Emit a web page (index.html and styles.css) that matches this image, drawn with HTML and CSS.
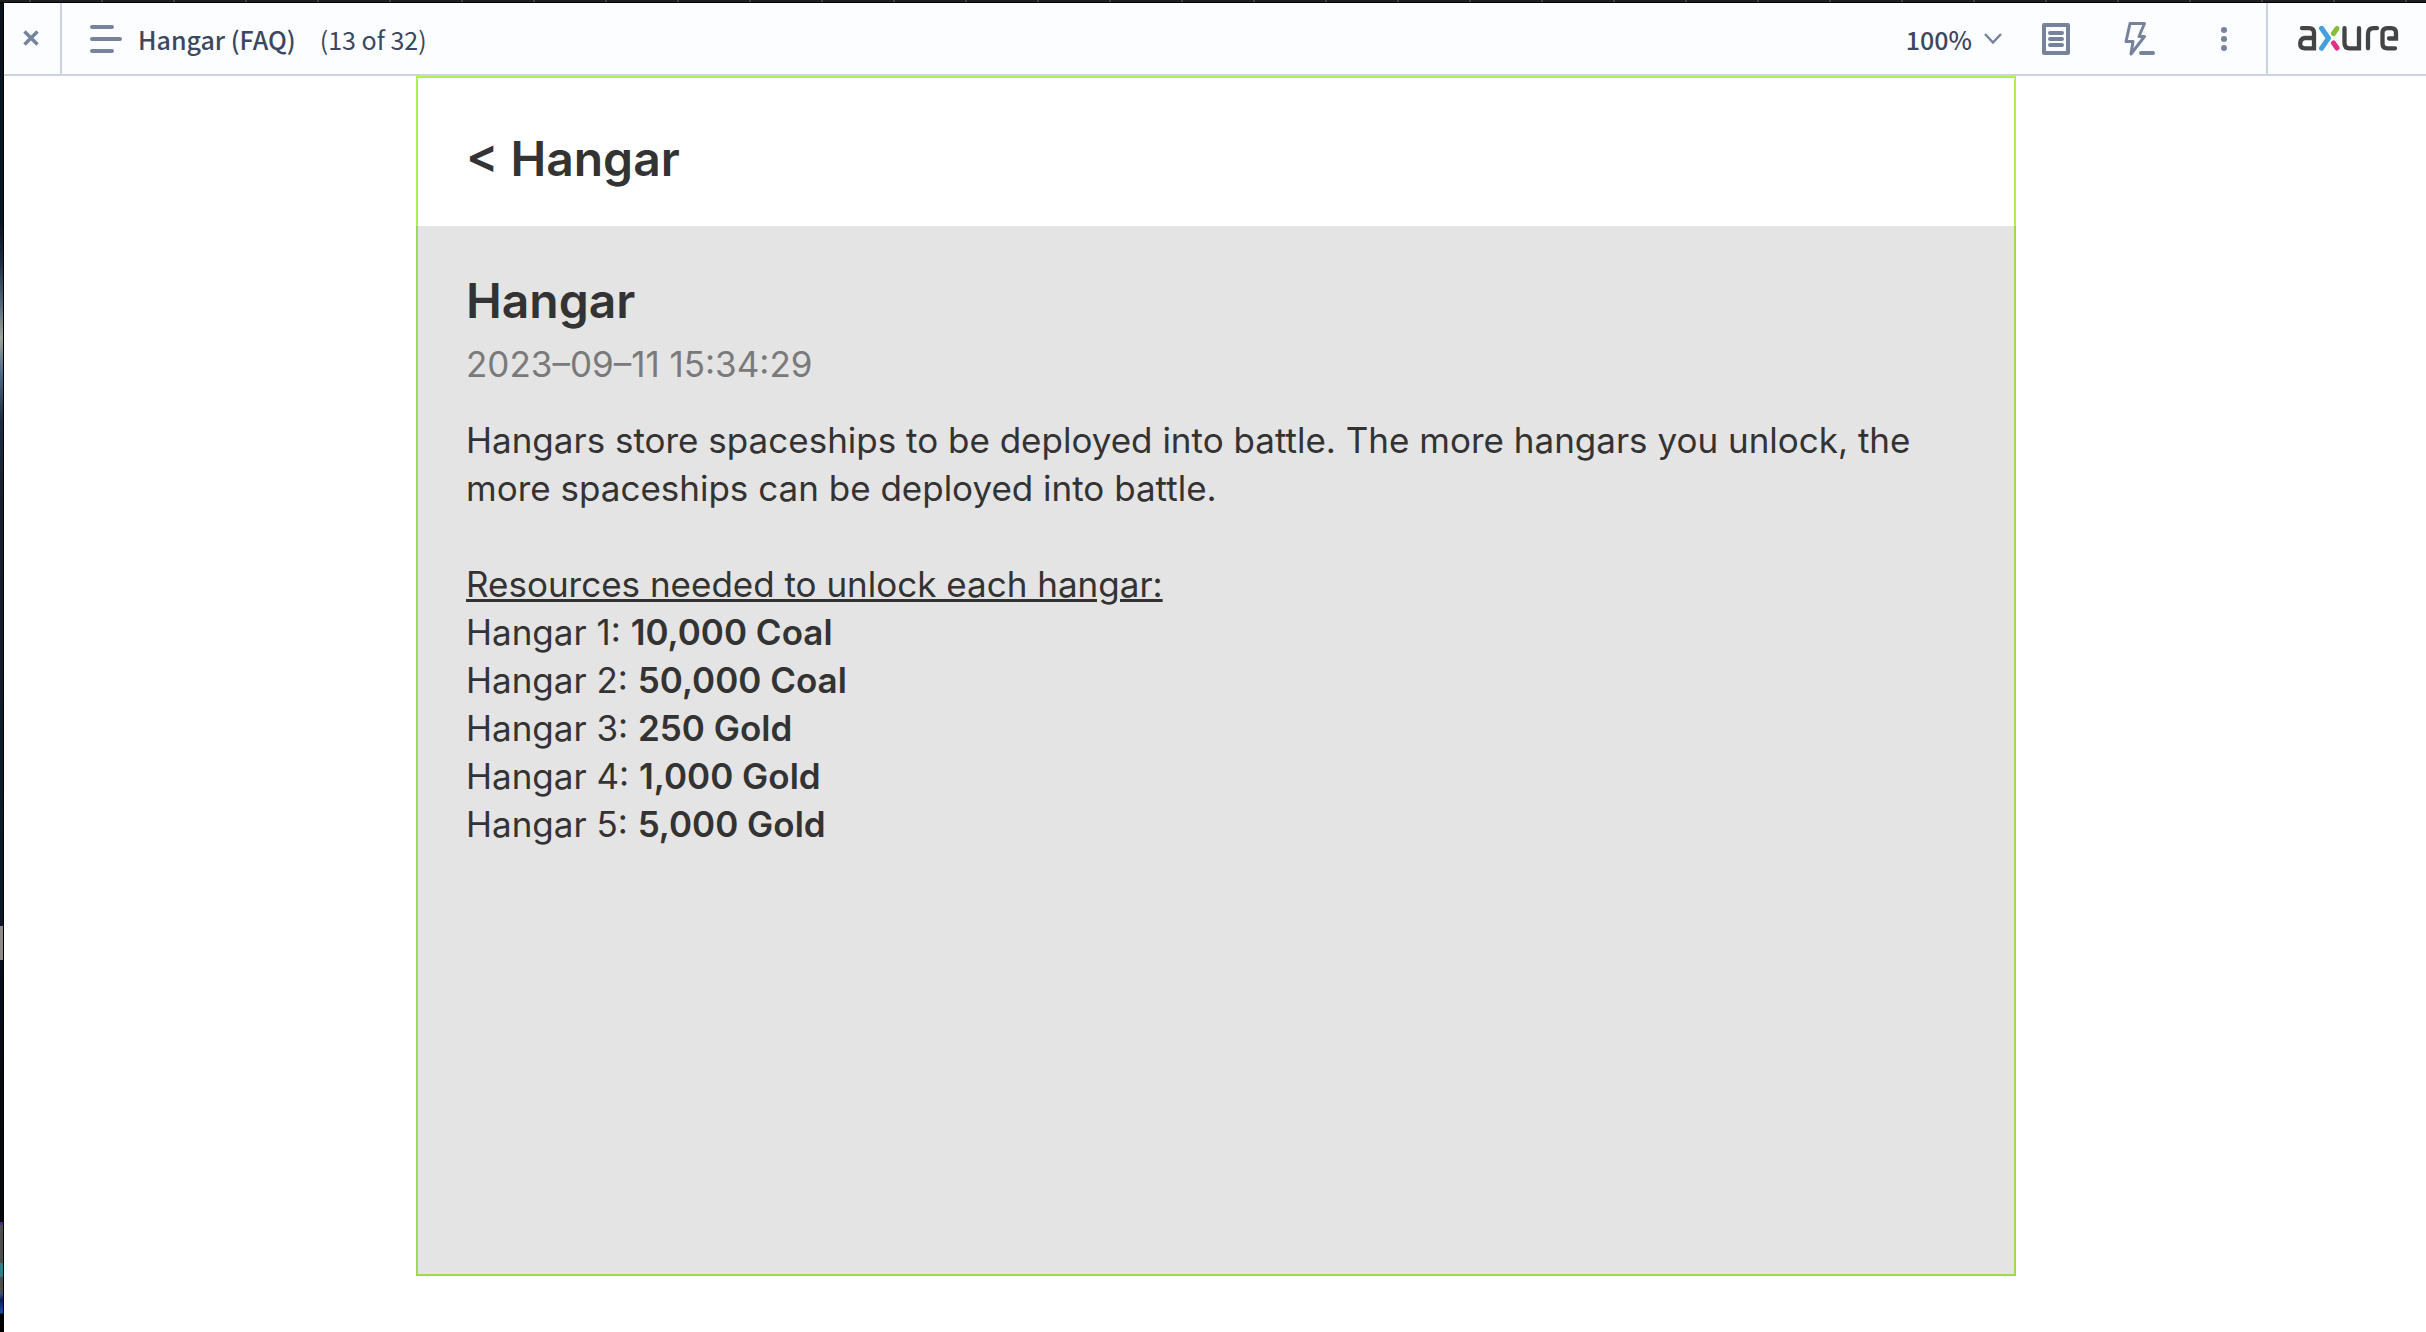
FILE: index.html
```html
<!DOCTYPE html>
<html lang="en">
<head>
<meta charset="utf-8">
<title>Hangar (FAQ)</title>
<link rel="stylesheet" href="styles.css">
</head>
<body>
<div class="window">
  <header class="toolbar">
    <button class="close" aria-label="Close">
      <svg width="16" height="16" viewBox="0 0 16 16"><path d="M1.500 1.500 14.500 14.500M14.500 1.500 1.500 14.500" stroke="currentColor" stroke-width="3.500"/></svg>
    </button>
    <button class="pages">
      <svg width="32" height="28" viewBox="0 0 32 28"><path d="M2 2H22M2 14H30M2 26H22" stroke="currentColor" stroke-width="4" stroke-linecap="round"/></svg>
      <span class="page-name">Hangar (FAQ)</span>
      <span class="page-count">(13 of 32)</span>
    </button>
    <div class="tools">
      <button class="zoom">100%
        <svg width="18" height="12" viewBox="0 0 18 12"><path d="M1 1 9 9.500 17 1" fill="none" stroke="currentColor" stroke-width="2.500"/></svg>
      </button>
      <button class="tool" aria-label="Notes">
        <svg width="28" height="32" viewBox="0 0 28 32"><rect x="2" y="2" width="24" height="28" fill="none" stroke="currentColor" stroke-width="4" stroke-linejoin="round"/><path d="M8 10H20M8 16H20M8 22H20" stroke="currentColor" stroke-width="4" stroke-linecap="round"/></svg>
      </button>
      <button class="tool" aria-label="Interactions">
        <svg width="32" height="36" viewBox="0 0 32 36"><path d="M6 2.500H20.500L15 15.500H20.500L7 33L9 20.500H2Z" fill="none" stroke="currentColor" stroke-width="3" stroke-linejoin="round"/><path d="M17 32H29" stroke="currentColor" stroke-width="4" stroke-linecap="round"/></svg>
      </button>
      <button class="tool" aria-label="More">
        <svg width="6" height="24" viewBox="0 0 6 24" fill="currentColor"><circle cx="3" cy="3" r="3"/><circle cx="3" cy="12" r="3"/><circle cx="3" cy="21" r="3"/></svg>
      </button>
    </div>
    <a class="brand" href="#" aria-label="Axure">
      <svg width="102" height="25" viewBox="0 0 102 25" fill="none" stroke="#444" stroke-width="4.300" stroke-linecap="round">
        <path d="M4 2.200H11Q16 2.200 16 7V22.300H7Q2.200 22.300 2.200 17.500T7 12H15.500"/>
        <path d="M23.500 2.200 30.500 12.200 23.500 22.300" stroke="#459fdb" stroke-width="5" stroke-linejoin="round"/>
        <path d="M39 2.500 35.500 7.500" stroke="#86bd3a" stroke-width="5"/>
        <path d="M39 22 35.500 17" stroke="#e03182" stroke-width="5"/>
        <path d="M46.500 2.200V17Q46.500 22.300 51.500 22.300H61V2.200"/>
        <path d="M70 22.300V8Q70 2.200 75.500 2.200H79"/>
        <path d="M97 22.300H89.500Q84.500 22.300 84.500 17.500V7Q84.500 2.200 89.500 2.200H93Q98 2.200 98 7V12.500H91"/>
      </svg>
    </a>
  </header>
  <main class="canvas">
    <article class="frame">
      <div class="frame-head"><a class="back" href="#">&lt; Hangar</a></div>
      <div class="frame-body">
        <h1>Hangar</h1>
        <time datetime="2023-09-11T15:34:29">2023–09–11 15:34:29</time>
        <p>Hangars store spaceships to be deployed into battle. The more hangars you unlock, the more spaceships can be deployed into battle.</p>
        <h2>Resources needed to unlock each hangar:</h2>
        <ul>
          <li>Hangar 1: <b>10,000 Coal</b></li>
          <li>Hangar 2: <b>50,000 Coal</b></li>
          <li>Hangar 3: <b>250 Gold</b></li>
          <li>Hangar 4: <b>1,000 Gold</b></li>
          <li>Hangar 5: <b>5,000 Gold</b></li>
        </ul>
      </div>
    </article>
  </main>
</div>
</body>
</html>
```
FILE: styles.css
```css
* { box-sizing: border-box; }
body {
  margin: 0;
  padding: 3px 0 0 4px;
  min-height: 100vh;
  display: flex;
  color: #333;
  font-family: Inter, sans-serif;
  background:
    linear-gradient(#000, #000) 0 2px / 100% 1px no-repeat,
    repeating-linear-gradient(90deg, #1f1f1f 0 29px, #444 29px 31px, #1f1f1f 31px 72px) 0 0 / 100% 2px no-repeat,
    linear-gradient(#000, #000) 3px 0 / 1px 100% no-repeat,
    linear-gradient(#0a121c 0, #0c1522 220px, #1d2a3c 260px, #52697c 305px, #a0a59c 338px, #54708a 370px, #1e2c40 420px, #18202b 500px, #0f1822 926px, #8f8c88 926px 960px, #080f18 960px, #03060a 1222px, #4a2a78 1222px 1225px, #4d4d4d 1225px 1263px, #2f7f86 1263px 1277px, #4d4d4d 1277px 1293px, #2c5c90 1293px, #10195c 1300px, #1c4fa0 1313px, #000 1314px) 0 0 / 3px 100% no-repeat;
}
.window { flex: 1; display: flex; flex-direction: column; background: #fff; }
button {
  border: 0;
  padding: 0;
  background: none;
  color: inherit;
  font: inherit;
}
.toolbar {
  display: flex;
  height: 73px;
  border-bottom: 2px solid #cbd3e0;
  background: #fcfdff;
  color: #76839a;
  font: 400 25px/36px "Noto Sans CJK SC", sans-serif;
}
.toolbar svg { flex: none; display: block; }
.close {
  width: 58px;
  padding: 0 0 2px 19px;
  border-right: 2px solid #cbd3e0;
}
.pages { display: flex; align-items: center; padding-left: 28px; }
.page-name { margin-left: 16px; color: #3c4760; font-weight: 500; }
.page-count { margin-left: 24px; color: #3c4760; }
.tools { display: flex; align-items: center; margin-left: auto; }
.zoom { display: flex; align-items: center; gap: 12px; margin-right: 12px; color: #3c4760; font-weight: 500; }
.zoom svg { color: #76839a; }
.tool { display: flex; justify-content: center; width: 84px; }
.brand { width: 160px; display: flex; align-items: center; padding-left: 30px; border-left: 2px solid #cbd3e0; }
.canvas { flex: 1; padding-left: 2px; }
.frame {
  width: 100%;
  max-width: 1600px;
  min-height: 1200px;
  margin: 0 auto;
  display: flex;
  flex-direction: column;
}
.frame-head {
  padding: 52px 48px 38px;
  border: 2px solid #adf04f;
  border-bottom: 0;
  font-size: 48px;
  line-height: 58px;
  font-weight: 600;
}
.back { color: inherit; text-decoration: none; }
.frame-body {
  flex: 1;
  padding: 46px 48px;
  border: 2px solid #a1d853;
  border-top: 0;
  background: #e4e4e4;
  font-size: 35px;
  line-height: 48px;
}
h1 { margin: 0; font-size: 48px; line-height: 58px; font-weight: 600; }
time { display: block; color: #7a7a7a; margin-top: 10px; }
p { margin: 28px 0 48px; }
h2 { margin: 0; font: inherit; text-decoration: underline; }
ul { margin: 0; padding: 0; list-style: none; }
b { font-weight: 600; }
```
